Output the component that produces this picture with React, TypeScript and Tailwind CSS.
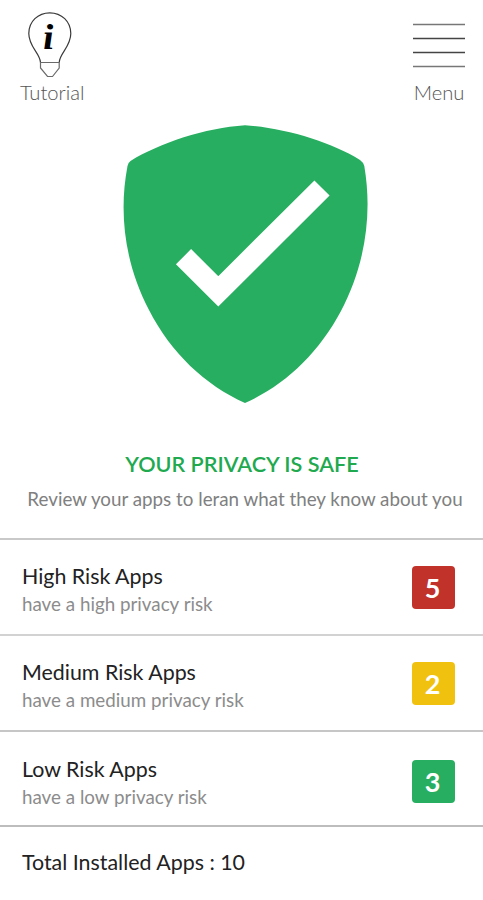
interface RiskRowProps {
  title: string;
  subtitle: string;
  count: number;
  badgeClass: string;
  rowClass: string;
}

/* ── Risk levels ───────────────────────────────────────────── */
const risks: RiskRowProps[] = [
  {
    title: "High Risk Apps",
    subtitle: "have a high privacy risk",
    count: 5,
    badgeClass: "bg-[#c0322a]",
    rowClass: "h-[96px] border-[#d2d2d2] pt-px",
  },
  {
    title: "Medium Risk Apps",
    subtitle: "have a medium privacy risk",
    count: 2,
    badgeClass: "bg-[#f0c20f]",
    rowClass: "h-[96px] border-[#c6c6c6] pt-px",
  },
  {
    title: "Low Risk Apps",
    subtitle: "have a low privacy risk",
    count: 3,
    badgeClass: "mt-px bg-[#27ae60]",
    rowClass: "h-[95px] border-[#bdbdbd] pt-[4px]",
  },
];

function BulbIcon() {
  return (
    <svg width="46" height="68" viewBox="0 0 46 68" fill="none" stroke="#3a3a3a" strokeWidth="1.2">
      <path d="M13.5 51.5C13 42 1.8 36 1.8 22.5C1.8 10.5 11 1.8 22.8 1.8S43.8 10.5 43.8 22.5C43.8 36 32.5 42 32.2 51.5" />
      <path d="M13.5 51.5H32.2V57L25.5 65.5H20.5L13.5 57Z" stroke="#6a6a6a" />
      <text
        transform="translate(21.8 37.5) skewX(3) scale(1.12 1)"
        textAnchor="middle"
        fill="#000"
        stroke="none"
        fontFamily="'Liberation Serif', serif"
        fontSize="36"
        fontWeight="bold"
        fontStyle="italic"
      >
        i
      </text>
    </svg>
  );
}

function MenuIcon() {
  return (
    <svg width="52" height="46" viewBox="0 0 52 46" strokeWidth="1.5">
      <path d="M0 1.5H52M0 43.5H52" stroke="#777" />
      <path d="M0 15.5H52M0 29.5H52" stroke="#444" />
    </svg>
  );
}

function Shield() {
  return (
    <svg className="ml-[6px]" width="246" height="280" viewBox="122 124 246 280">
      <path
        d="M245 125.3C285 128 331 142 360 160Q363.5 162.5 364.3 166C373 217 364 267 341 311C318 354 285 385 245 403C205 385 171 353 149 310C126 266 118 216 127.5 166Q127.8 163 130.5 161C160 143 205 128 245 125.3Z"
        fill="#27ae60"
      />
      <path d="M183.5 256.7L218.3 291.3L322 188" fill="none" stroke="#fff" strokeWidth="21.5" />
    </svg>
  );
}

function RiskRow({ title, subtitle, count, badgeClass, rowClass }: RiskRowProps) {
  return (
    <div className={`flex items-center justify-between border-b-2 pl-[22px] pr-[28px] ${rowClass}`}>
      <div className="pt-[5px] whitespace-nowrap">
        <div className="text-[21.4px] leading-[28px] text-[#222]">{title}</div>
        <div className="text-[18.8px] leading-[28px] text-[#8c8c8c]">{subtitle}</div>
      </div>
      <div
        className={`flex h-[43px] w-[43px] items-center justify-center rounded-[4px] pr-[2px] text-[27px] leading-none font-bold text-white ${badgeClass}`}
      >
        {count}
      </div>
    </div>
  );
}

export default function App() {
  return (
    <div className="flex h-[900px] w-full flex-col overflow-hidden bg-white font-['Lato',sans-serif]">
      {/* ── Top bar ── */}
      <header className="flex h-[124px] justify-between pl-[20px] pr-[18px] pt-[11px] text-[20.2px] leading-[24px] font-light text-[#555]">
        <button className="flex h-[94px] flex-col items-start">
          <span className="ml-[7px]">
            <BulbIcon />
          </span>
          <span className="mt-px">Tutorial</span>
        </button>
        <button className="flex h-[94px] flex-col items-center pt-[12px]">
          <MenuIcon />
          <span className="mt-[11px]">Menu</span>
        </button>
      </header>

      {/* ── Status ── */}
      <main className="flex h-[414px] flex-col items-center whitespace-nowrap">
        <Shield />
        <h1 className="ml-px mt-[46px] text-[21.6px] leading-[28px] font-semibold text-[#21a94f]">
          YOUR PRIVACY IS SAFE
        </h1>
        <p className="ml-[7px] mt-[8px] text-[18.8px] leading-[26px] text-[#808080]">
          Review your apps to leran what they know about you
        </p>
      </main>

      {/* ── Risk list ── */}
      <section className="border-t-2 border-[#c9c9c9]">
        {risks.map((risk) => (
          <RiskRow key={risk.title} {...risk} />
        ))}
      </section>

      <footer className="pl-[22px] pt-[21px] text-[21.4px] leading-[28px] text-[#222]">
        Total Installed Apps : 10
      </footer>
    </div>
  );
}
